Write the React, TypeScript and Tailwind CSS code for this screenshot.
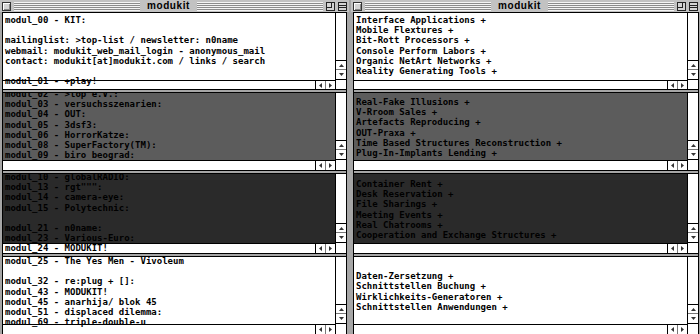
const mono = "font-['DejaVu_Sans_Mono',monospace]";

type PaneSpec = {
  height: string;
  column: string;
  bg: string;
  shift: string;
  bottom: string;
  lines: string[];
};

const leftPanes: PaneSpec[] = [
  {
    height: 'h-[76px]',
    column: 'h-[67px]',
    bg: 'bg-[linear-gradient(to_bottom,#fff_67px,#000_67px,#000_68px,#fff_68px)]',
    shift: 'mt-[2px]',
    bottom: 'h-[8px]',
    lines: [
      'modul_00 - KIT:',
      '',
      'mailinglist: >top-list / newsletter: n0name',
      'webmail: modukit_web_mail_login - anonymous_mail',
      'contact: modukit[at]modukit.com / links / search',
      '',
      'modul_01 - +play!',
    ],
  },
  {
    height: 'h-[77px]',
    column: 'h-[67px]',
    bg: 'bg-[linear-gradient(to_bottom,#5c5c5c_67px,#000_67px,#000_68px,#fff_68px)]',
    shift: '-mt-[4px]',
    bottom: 'h-[9px]',
    lines: [
      'modul_02 - >top e.V.:',
      'modul_03 - versuchsszenarien:',
      'modul_04 - OUT:',
      'modul_05 - 3dsf3:',
      'modul_06 - HorrorKatze:',
      'modul_08 - SuperFactory(TM):',
      'modul_09 - biro beograd:',
    ],
  },
  {
    height: 'h-[79px]',
    column: 'h-[69px]',
    bg: 'bg-[linear-gradient(to_bottom,#2a2a2a_69px,#000_69px,#000_70px,#fff_70px)]',
    shift: '-mt-[2px]',
    bottom: 'h-[9px]',
    lines: [
      'modul_10 - globalRADIO:',
      'modul_13 - rgt""":',
      'modul_14 - camera-eye:',
      'modul_15 - Polytechnic:',
      '',
      'modul_21 - n0name:',
      'modul_23 - Various-Euro:',
      'modul_24 - MODUKIT!',
    ],
  },
  {
    height: 'h-[77px]',
    column: 'h-[67px]',
    bg: 'bg-[linear-gradient(to_bottom,#fff_67px,#000_67px,#000_68px,#fff_68px)]',
    shift: '-mt-[1px]',
    bottom: 'h-[9px]',
    lines: [
      'modul_25 - The Yes Men - Vivoleum',
      '',
      'modul_32 - re:plug + []:',
      'modul_43 - MODUKIT!',
      'modul_45 - anarhija/ blok 45',
      'modul_51 - displaced dilemma:',
      'modul_69 - triple-double-u',
    ],
  },
];

const rightPanes: PaneSpec[] = [
  {
    ...leftPanes[0],
    lines: [
      'Interface Applications +',
      'Mobile Flextures +',
      'Bit-Rott Processors +',
      'Console Perform Labors +',
      'Organic NetArt Networks +',
      'Reality Generating Tools +',
    ],
  },
  {
    ...leftPanes[1],
    shift: 'mt-[4px]',
    lines: [
      'Real-Fake Illusions +',
      'V-Rroom Sales +',
      'Artefacts Reproducing +',
      'OUT-Praxa +',
      'Time Based Structures Reconstruction +',
      'Plug-In-Implants Lending +',
    ],
  },
  {
    ...leftPanes[2],
    shift: 'mt-[5px]',
    lines: [
      'Container Rent +',
      'Desk Reservation +',
      'File Sharings +',
      'Meeting Events +',
      'Real Chatrooms +',
      'Cooperation and Exchange Structures +',
    ],
  },
  {
    ...leftPanes[3],
    shift: 'mt-[4px]',
    lines: [
      '',
      'Daten-Zersetzung +',
      'Schnittstellen Buchung +',
      'Wirklichkeits-Generatoren +',
      'Schnittstellen Anwendungen +',
    ],
  },
];

function Tri({ dir }: { dir: 'up' | 'down' | 'left' | 'right' }) {
  const pts = {
    up: '2.5,0 5,3 0,3',
    down: '0,0 5,0 2.5,3',
    left: '0,2.5 3,0 3,5',
    right: '0,0 3,2.5 0,5',
  }[dir];
  const vertical = dir === 'up' || dir === 'down';
  return (
    <svg width={vertical ? 5 : 3} height={vertical ? 3 : 5} viewBox={vertical ? '0 0 5 3' : '0 0 3 5'}>
      <polygon points={pts} fill="#333" />
    </svg>
  );
}

function Pane({ spec }: { spec: PaneSpec }) {
  return (
    <div className={`flex ${spec.height}`}>
      <div className={`relative flex-1 overflow-hidden ${spec.bg}`}>
        <div className={`${spec.shift} whitespace-pre px-[2px] text-[9px] font-bold leading-[10.2px] text-black ${mono}`}>
          {spec.lines.map((l, i) => (
            <div key={i} className="h-[10.2px]">
              {l}
            </div>
          ))}
        </div>
        {/* horizontal scroll arrows */}
        <div className={`absolute bottom-0 right-0 flex w-[20px] border-l border-black bg-white ${spec.bottom}`}>
          <div className="flex flex-1 items-center justify-center border-r border-[#777]">
            <Tri dir="left" />
          </div>
          <div className="flex flex-1 items-center justify-center">
            <Tri dir="right" />
          </div>
        </div>
      </div>
      <div className="flex w-[11px] flex-col border-l border-black bg-white">
        <div className={`flex flex-col justify-end border-b border-black ${spec.column}`}>
          <div className="flex h-[9px] items-center justify-center border-t border-black">
            <Tri dir="up" />
          </div>
          <div className="flex h-[10px] items-center justify-center border-t border-[#777]">
            <Tri dir="down" />
          </div>
        </div>
      </div>
    </div>
  );
}

function Stripes() {
  return (
    <div className="h-[9px] flex-1 bg-[repeating-linear-gradient(to_bottom,#f4f4f4_0px,#f4f4f4_1px,#8c8c8c_1px,#8c8c8c_2px)]" />
  );
}

function TitleBar() {
  return (
    <div className="flex h-[12px] items-center gap-[3px] bg-[#c2c2c2] px-[2px]">
      <div className="h-[9px] w-[9px] border border-[#333] bg-[#d4d4d4] shadow-[inset_1px_1px_0_#fff,inset_-1px_-1px_0_#888]" />
      <Stripes />
      <span className="px-[4px] font-['Liberation_Sans',sans-serif] text-[10px] font-bold leading-none tracking-[0.6px] text-black">
        modukit
      </span>
      <Stripes />
      <svg width="9" height="9" viewBox="0 0 9 9">
        <rect x="0.5" y="0.5" width="8" height="8" fill="#d4d4d4" stroke="#222" />
        <rect x="0.5" y="0.5" width="5" height="5" fill="none" stroke="#222" />
      </svg>
      <svg width="9" height="9" viewBox="0 0 9 9">
        <rect x="0.5" y="0.5" width="8" height="8" fill="#d4d4d4" stroke="#222" />
        <line x1="1" y1="3.5" x2="8" y2="3.5" stroke="#222" />
        <line x1="1" y1="5.5" x2="8" y2="5.5" stroke="#222" />
      </svg>
    </div>
  );
}

function Window({ panes, body }: { panes: PaneSpec[]; body: string }) {
  return (
    <div className="flex w-[349px] flex-col">
      <TitleBar />
      <div className={`flex flex-1 flex-col overflow-hidden border-x border-t border-black ${body}`}>
        {panes.map((p, i) => (
          <div key={i} className="flex flex-col">
            {i > 0 && <div className="h-[4px] border-y border-black bg-[#a6a6a6]" />}
            <Pane spec={p} />
          </div>
        ))}
      </div>
    </div>
  );
}

export default function App() {
  return (
    <div className="flex h-[334px] w-[700px] gap-[2px] overflow-hidden bg-[#a6a6a6]">
      <Window panes={leftPanes} body="mx-[2px]" />
      <Window panes={rightPanes} body="ml-[2px] mr-[1px]" />
    </div>
  );
}
